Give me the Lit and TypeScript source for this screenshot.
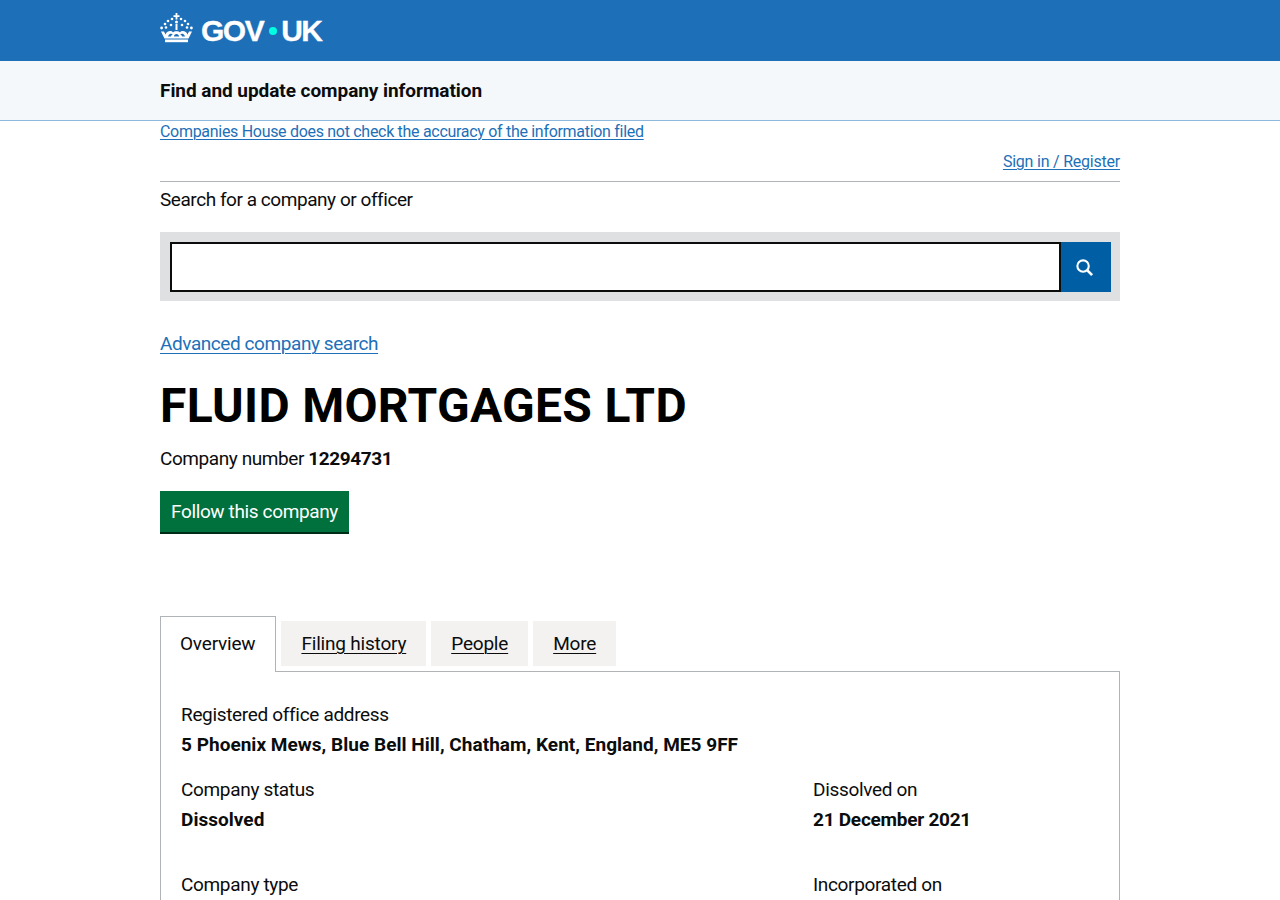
import { LitElement, html, css } from "lit";
import { customElement } from "lit/decorators.js";

@customElement("app-root")
export class AppRoot extends LitElement {
  static styles = css`
    :host { display: block; height: 900px; overflow: hidden; font-family: Roboto, "Liberation Sans", sans-serif; color: #0b0c0c; font-size: 19px; line-height: 25px; background: #fff; }
    * { box-sizing: border-box; }
    a { color: #1d70b8; text-underline-offset: 3px; text-decoration-thickness: 1px; }
    .wrap { width: 960px; margin: 0 auto; }
    .top { background: #1d70b8; height: 61px; }
    .top .wrap { display: flex; align-items: center; height: 61px; }
    .crown { width: 33px; height: 32px; margin: 0 8px 7px 0; flex: none; }
    .logo { font-family: "Liberation Sans", sans-serif; font-weight: 700; font-size: 30px; letter-spacing: -1.5px; -webkit-text-stroke: 0.3px #fff; color: #fff; display: flex; align-items: center; line-height: 1; }
    .dot { width: 8px; height: 8px; border-radius: 50%; background: #00ffe0; margin: 0 4px 0 6px; }
    .service { background: #f4f8fb; height: 60px; border-bottom: 1px solid #8eb8dc; }
    .service .wrap { display: flex; align-items: center; height: 59px; font-weight: 700; font-size: 19px; letter-spacing: -0.05px; }
    .notice { font-size: 16px; line-height: 20px; display: block; padding-top: 1px; letter-spacing: -0.3px; text-underline-offset: 2px; }
    .auth { display: flex; justify-content: flex-end; font-size: 16px; line-height: 20px; margin-top: 9px; padding: 1px 0 9px; border-bottom: 1px solid #b1b4b6; letter-spacing: -0.22px; }
    .auth a { text-underline-offset: 2px; }
    .label { margin-top: 5px; letter-spacing: -0.45px; }
    .search { margin-top: 20px; height: 69px; background: #dee0e2; padding: 10px 9px 9px 10px; display: flex; }
    .field { flex: 1; height: 50px; border: 2px solid #0b0c0c; background: #fff; }
    .go { width: 50px; height: 50px; background: #005ea5; display: flex; align-items: center; justify-content: center; }
    .go svg { margin-right: 3px; }
    .adv { display: block; margin-top: 30px; letter-spacing: -0.43px; }
    h1 { font-size: 48px; line-height: 50px; font-weight: 700; margin: 25px 0 0; letter-spacing: 0.3px; color: #000; }
    .num { margin-top: 15px; letter-spacing: -0.42px; }
    .num b { font-weight: 700; }
    .follow { display: inline-block; margin-top: 20px; height: 43px; padding: 8px 11px; background: #00703c; box-shadow: inset 0 -2px 0 #002d18; color: #fff; letter-spacing: -0.37px; }
    .tabs { display: flex; align-items: flex-start; gap: 5px; margin-top: 82px; position: relative; z-index: 1; letter-spacing: -0.2px; }
    .tab { height: 45px; margin-top: 5px; background: #f3f2f1; padding: 10px 20px; color: #0b0c0c; }
    .tab a { color: #0b0c0c; }
    .tab.on { height: 56px; margin-top: 0; background: #fff; border: 1px solid #b1b4b6; border-bottom: 0; padding: 14px 20px 15px 19px; }
    .panel { border: 1px solid #b1b4b6; margin-top: -1px; padding: 30px 20px 40px; height: 400px; }
    .row { display: grid; grid-template-columns: 632px 1fr; }
    .dt { line-height: 25px; letter-spacing: -0.33px; }
    .dd { font-weight: 700; margin-top: 5px; letter-spacing: 0.03px; }
    .date { letter-spacing: -0.25px; }
    .r2 { margin-top: 20px; }
    .r3 { margin-top: 40px; }
  `;

  render() {
    return html`
      <div class="top"><div class="wrap">
        <svg class="crown" viewBox="0 0 33 32" fill="#fff">
          <path d="M15.6 2h1.8v2.2h2.1v1.700h-2.100v2.600h-1.800V5.900h-2.100V4.200h2.100z"/>
          <circle cx="12" cy="8" r="1.3"/><circle cx="21" cy="8" r="1.3"/>
          <circle cx="8" cy="10" r="1.3"/><circle cx="25" cy="10" r="1.3"/>
          <circle cx="5" cy="13" r="1.3"/><circle cx="28" cy="13" r="1.3"/>
          <circle cx="16.5" cy="11" r="1.5"/>
          <circle cx="1.6" cy="17" r="1.4"/><circle cx="31.4" cy="17" r="1.4"/>
          <circle cx="6" cy="16.5" r="1.3"/><circle cx="27" cy="16.5" r="1.3"/>
          <circle cx="11" cy="14" r="1.3"/><circle cx="22" cy="14" r="1.3"/>
          <path d="M15.500 13h2v6h-2z"/>
          <path d="M1 20.500h3l1.500 3c1-2.500 3-3.400 4.600-3.400 1.200 0 2.200.5 2.900 1.400.7-.7 1.600-1.200 3.500-1.200s2.800.5 3.500 1.200c.7-.9 1.700-1.400 2.900-1.400 1.600 0 3.600.9 4.600 3.400l1.500-3h3l-3.500 7H4.500zM8 25.500h3c.1-1 .9-1.600 1.800-2-.7-.7-2-.9-3-.4-.9.5-1.500 1.400-1.800 2.400zm14 0h3c-.3-1-.9-1.900-1.800-2.400-1-.5-2.300-.3-3 .4.9.4 1.700 1 1.800 2zm-8 0h5c0-1.500-1-2.500-2.500-2.500s-2.500 1-2.500 2.500z"/>
          <path d="M5 28.500h23v2.700H5z"/>
        </svg>
        <div class="logo"><span>GOV</span><span class="dot"></span><span>UK</span></div>
      </div></div>
      <div class="service"><div class="wrap">Find and update company information</div></div>
      <div class="wrap">
        <a class="notice" href="#">Companies House does not check the accuracy of the information filed</a>
        <div class="auth"><a href="#">Sign in / Register</a></div>
        <div class="label">Search for a company or officer</div>
        <div class="search">
          <div class="field"></div>
          <div class="go">
            <svg width="19" height="19" viewBox="0 0 20 20" fill="none" stroke="#fff">
              <circle cx="8.500" cy="8.500" r="6" stroke-width="2.200"/>
              <path d="M13 13l5 5" stroke-width="2.800"/>
            </svg>
          </div>
        </div>
        <a class="adv" href="#">Advanced company search</a>
        <h1>FLUID MORTGAGES LTD</h1>
        <div class="num">Company number <b>12294731</b></div>
        <div class="follow">Follow this company</div>
        <div class="tabs">
          <div class="tab on">Overview</div>
          <div class="tab"><a href="#">Filing history</a></div>
          <div class="tab"><a href="#">People</a></div>
          <div class="tab"><a href="#">More</a></div>
        </div>
        <div class="panel">
          <div class="dt">Registered office address</div>
          <div class="dd">5 Phoenix Mews, Blue Bell Hill, Chatham, Kent, England, ME5 9FF</div>
          <div class="row r2">
            <div><div class="dt">Company status</div><div class="dd">Dissolved</div></div>
            <div><div class="dt">Dissolved on</div><div class="dd date">21 December 2021</div></div>
          </div>
          <div class="row r3">
            <div class="dt">Company type</div>
            <div class="dt">Incorporated on</div>
          </div>
        </div>
      </div>
    `;
  }
}
